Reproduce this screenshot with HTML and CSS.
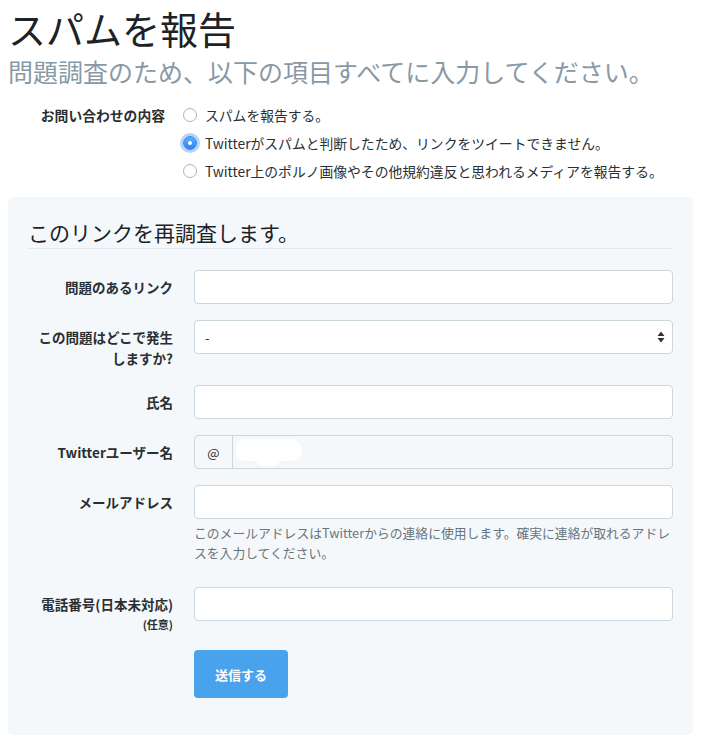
FILE: index.html
```html
<!DOCTYPE html>
<html lang="ja">
<head>
<meta charset="utf-8">
<title>スパムを報告</title>
<link rel="stylesheet" href="styles.css">
</head>
<body>
<h1 class="title">スパムを報告</h1>
<p class="subtitle">問題調査のため、以下の項目すべてに入力してください。</p>

<div class="inquiry">
  <div class="inquiry-label">お問い合わせの内容</div>
  <div class="radios">
    <div class="radio-row"><span class="radio"></span><span>スパムを報告する。</span></div>
    <div class="radio-row"><span class="radio checked"></span><span>Twitterがスパムと判断したため、リンクをツイートできません。</span></div>
    <div class="radio-row"><span class="radio"></span><span>Twitter上のポルノ画像やその他規約違反と思われるメディアを報告する。</span></div>
  </div>
</div>

<div class="panel">
  <h2 class="panel-title">このリンクを再調査します。</h2>
  <div class="form">
    <div class="label">問題のあるリンク</div>
    <div class="field"><div class="input"></div></div>

    <div class="label">この問題はどこで発生<br>しますか?</div>
    <div class="field">
      <div class="input select">
        <span>-</span>
        <svg class="arrows" width="8" height="12" viewBox="0 0 8 12"><path d="M4 0.5 L7.5 5 L0.5 5 Z M4 11.5 L7.5 7 L0.5 7 Z" fill="#333"/></svg>
      </div>
    </div>

    <div class="label">氏名</div>
    <div class="field"><div class="input"></div></div>

    <div class="label">Twitterユーザー名</div>
    <div class="field">
      <div class="input group">
        <span class="addon">@</span>
        <span class="group-body"><span class="blot"></span><span class="blot-tail"></span></span>
      </div>
    </div>

    <div class="label">メールアドレス</div>
    <div class="field">
      <div class="input"></div>
      <p class="help">このメールアドレスはTwitterからの連絡に使用します。確実に連絡が取れるアドレスを入力してください。</p>
    </div>

    <div class="label">電話番号(日本未対応)<span class="optional">(任意)</span></div>
    <div class="field"><div class="input"></div></div>

    <div class="label"></div>
    <div class="field"><button class="submit" type="button">送信する</button></div>
  </div>
</div>
</body>
</html>
```

FILE: styles.css
```css
body {
  margin: 8px;
  font-family: "Noto Sans CJK JP", "Noto Sans", sans-serif;
  color: #292f33;
  background: #ffffff;
}

.title {
  margin: 0;
  font-size: 38px;
  line-height: 40px;
  font-weight: 400;
  color: #1c2227;
}

.subtitle {
  margin: 8px 0 0;
  font-size: 25px;
  line-height: 30px;
  color: #8899a6;
}

.inquiry {
  margin-top: 15px;
  display: grid;
  grid-template-columns: 157px 1fr;
  column-gap: 18px;
  font-size: 14px;
}

.inquiry-label {
  text-align: right;
  font-weight: 700;
  font-size: 13.8px;
  line-height: 28px;
  white-space: nowrap;
}

.radio-row {
  display: flex;
  align-items: center;
  gap: 8px;
  height: 28px;
  font-size: 13.8px;
}

.radio {
  box-sizing: border-box;
  width: 14px;
  height: 14px;
  border-radius: 50%;
  border: 1px solid #b3b3b3;
  background: #fff;
  flex: none;
  display: flex;
  align-items: center;
  justify-content: center;
}

.radio.checked {
  border-color: #2f86e8;
  background: linear-gradient(#62adff, #2b84f0);
  box-shadow: 0 0 0 3px rgba(94, 158, 240, 0.45);
}

.radio.checked::after {
  content: "";
  width: 4px;
  height: 4px;
  border-radius: 50%;
  background: #fff;
}

.panel {
  margin-top: 12px;
  width: 685px;
  box-sizing: border-box;
  padding: 20px 20px 21px;
  background: #f5f8fa;
  border-radius: 5px;
}

.panel-title {
  margin: 0;
  font-size: 21px;
  line-height: 30px;
  font-weight: 400;
  color: #1c2227;
  padding-bottom: 1px;
  border-bottom: 1px solid #e1e8ed;
}

.form {
  margin-top: 21px;
  display: grid;
  grid-template-columns: 145px 1fr;
  column-gap: 21px;
  row-gap: 16px;
}

.label {
  text-align: right;
  font-size: 13.5px;
  font-weight: 700;
  line-height: 21px;
  padding-top: 7px;
  white-space: nowrap;
}

.optional {
  display: block;
  font-size: 11px;
  line-height: 19px;
}

.input {
  box-sizing: border-box;
  height: 34px;
  background: #fff;
  border: 1px solid #ccd6dd;
  border-radius: 4px;
}

.select {
  display: flex;
  align-items: center;
  justify-content: space-between;
  padding: 0 7px 0 10px;
  font-size: 13px;
}

.group {
  display: flex;
  background: #f5f8fa;
}

.addon {
  width: 37px;
  border-right: 1px solid #ccd6dd;
  display: flex;
  align-items: center;
  justify-content: center;
  font-size: 13px;
  color: #292f33;
}

.group-body {
  flex: 1;
  display: flex;
  align-items: center;
  position: relative;
}

.blot {
  width: 66px;
  height: 22px;
  margin-left: 3px;
  margin-top: -4px;
  background: #fff;
  border-radius: 11px 14px 12px 10px;
}

.blot-tail {
  position: absolute;
  left: 22px;
  top: 14px;
  width: 26px;
  height: 16px;
  background: #fff;
  border-radius: 50%;
}

.help {
  margin: 4px 0 8px;
  font-size: 12.8px;
  line-height: 20px;
  color: #66757f;
}

.submit {
  width: 94px;
  height: 48px;
  border: 0;
  border-radius: 4px;
  background: #48a3ec;
  color: #fff;
  font-family: inherit;
  font-size: 13px;
  font-weight: 700;
  margin-bottom: 16px;
}
```
